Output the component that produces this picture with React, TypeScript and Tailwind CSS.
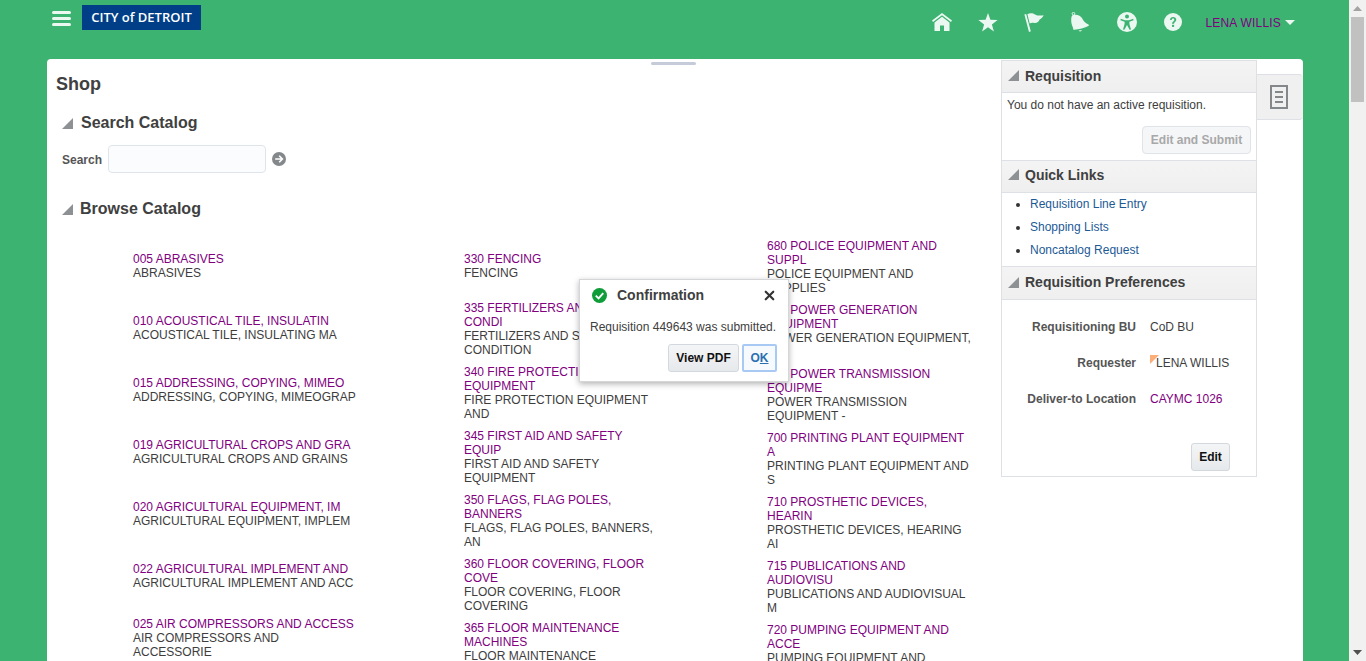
import { X } from "lucide-react"

type Item = { link: string[]; desc: string[] }

const col1: Item[] = [
  { link: ["005 ABRASIVES"], desc: ["ABRASIVES"] },
  { link: ["010 ACOUSTICAL TILE, INSULATIN"], desc: ["ACOUSTICAL TILE, INSULATING MA"] },
  { link: ["015 ADDRESSING, COPYING, MIMEO"], desc: ["ADDRESSING, COPYING, MIMEOGRAP"] },
  { link: ["019 AGRICULTURAL CROPS AND GRA"], desc: ["AGRICULTURAL CROPS AND GRAINS"] },
  { link: ["020 AGRICULTURAL EQUIPMENT, IM"], desc: ["AGRICULTURAL EQUIPMENT, IMPLEM"] },
  { link: ["022 AGRICULTURAL IMPLEMENT AND"], desc: ["AGRICULTURAL IMPLEMENT AND ACC"] },
  { link: ["025 AIR COMPRESSORS AND ACCESS"], desc: ["AIR COMPRESSORS AND", "ACCESSORIE"] },
]

const col2: Item[] = [
  { link: ["330 FENCING"], desc: ["FENCING"] },
  { link: ["335 FERTILIZERS AND SOIL", "CONDI"], desc: ["FERTILIZERS AND SOIL", "CONDITION"] },
  { link: ["340 FIRE PROTECTION", "EQUIPMENT"], desc: ["FIRE PROTECTION EQUIPMENT", "AND"] },
  { link: ["345 FIRST AID AND SAFETY", "EQUIP"], desc: ["FIRST AID AND SAFETY", "EQUIPMENT"] },
  { link: ["350 FLAGS, FLAG POLES,", "BANNERS"], desc: ["FLAGS, FLAG POLES, BANNERS,", "AN"] },
  { link: ["360 FLOOR COVERING, FLOOR", "COVE"], desc: ["FLOOR COVERING, FLOOR", "COVERING"] },
  { link: ["365 FLOOR MAINTENANCE", "MACHINES"], desc: ["FLOOR MAINTENANCE", "MACHINES"] },
]

const col3: Item[] = [
  { link: ["680 POLICE EQUIPMENT AND", "SUPPL"], desc: ["POLICE EQUIPMENT AND", "SUPPLIES"] },
  { link: ["685 POWER GENERATION", "EQUIPMENT"], desc: ["POWER GENERATION EQUIPMENT,", "A"] },
  { link: ["690 POWER TRANSMISSION", "EQUIPME"], desc: ["POWER TRANSMISSION", "EQUIPMENT -"] },
  { link: ["700 PRINTING PLANT EQUIPMENT", "A"], desc: ["PRINTING PLANT EQUIPMENT AND", "S"] },
  { link: ["710 PROSTHETIC DEVICES,", "HEARIN"], desc: ["PROSTHETIC DEVICES, HEARING", "AI"] },
  { link: ["715 PUBLICATIONS AND", "AUDIOVISU"], desc: ["PUBLICATIONS AND AUDIOVISUAL", "M"] },
  { link: ["720 PUMPING EQUIPMENT AND", "ACCE"], desc: ["PUMPING EQUIPMENT AND", "ACCESSORIES"] },
]

function Corner({ className }: { className: string }) {
  return (
    <svg viewBox="0 0 11 11" className={className}>
      <path d="M11 0V11H0Z" fill="#8e9194" />
    </svg>
  )
}

function CatalogColumn({ items, first, rest, width }: { items: Item[]; first: string; rest: string; width: string }) {
  return (
    <div className={`flex flex-col shrink-0 ${width}`}>
      {items.map((item, i) => (
        <div key={item.link[0]} className={`flex flex-col justify-center text-xs leading-[14px] whitespace-nowrap ${i === 0 ? first : rest}`}>
          {item.link.map((l) => (
            <a key={l} className="text-[#800080]">{l}</a>
          ))}
          {item.desc.map((d) => (
            <span key={d} className="text-[#3d3d3d]">{d}</span>
          ))}
        </div>
      ))}
    </div>
  )
}

function PanelHeader({ title, height }: { title: string; height: string }) {
  return (
    <div className={`flex items-center gap-[6px] pl-[6px] border-y border-[#dde0e4] bg-gradient-to-b from-[#f4f4f4] to-[#efefef] ${height}`}>
      <Corner className="w-[11px] h-[11px]" />
      <span className="text-sm font-bold text-[#404040]">{title}</span>
    </div>
  )
}

function TopIcons() {
  return (
    <div className="flex items-center text-[#ebf8f1]">
      <svg viewBox="0 0 20 18" className="w-[20px] h-[18px] fill-current">
        <path d="M10 0 20 7.6 19 8.9 10 2.2 1 8.9 0 7.6Z" />
        <path d="M10 3.8 17.5 9.4V18H12V12.5H8V18H2.5V9.4Z" />
      </svg>
      <svg viewBox="0 0 20 19" className="ml-[26px] w-[20px] h-[19px] fill-current">
        <path d="M10 0 12.4 6.8 19.6 7 13.9 11.4 15.9 18.4 10 14.3 4.1 18.4 6.1 11.4 0.4 7 7.6 6.8Z" />
      </svg>
      <svg viewBox="0 0 20 19" className="ml-[26px] w-[20px] h-[19px] fill-current">
        <path d="M0.4 1.6 2.2 1 6.8 18.3 5 18.9Z" />
        <path d="M3.4 1.2C6 -0.4 9 0.2 11 1.4 13 2.6 16.6 3 19.6 2.2 18.6 4.6 17.4 5.4 15.6 6.4 15.2 8.4 12.8 10.2 10.6 10 8.8 9.8 7.4 9.4 5.7 10.6Z" />
      </svg>
      <svg viewBox="0 0 20 21" className="ml-[27px] w-[19px] h-[20px] fill-current">
        <circle cx="2.6" cy="1.8" r="1.4" fill="none" stroke="currentColor" strokeWidth="1" />
        <path d="M1.5 3.4C5 2 10 3 12 7 13.5 10 15.5 11.5 18.5 13.2L18.8 14.5C14 17 8 18.8 2.5 18.6 2.5 16 0.5 14 0.3 10.5 0.2 8 0 5 1.5 3.4Z" />
        <path d="M8 19.4C9 19.5 10.2 19.3 11.4 19 11.1 20.6 9 21 8 19.4Z" />
      </svg>
      <svg viewBox="0 0 20 20" className="ml-[27px] w-[20px] h-[20px]">
        <circle cx="10" cy="10" r="10" fill="currentColor" />
        <circle cx="10" cy="4.6" r="2" fill="#3db372" />
        <path d="M3.8 6.8 8 8.2H12L16.2 6.8 16.6 8.2 12.4 9.8V12L14 17.4 12.6 17.8 10 13 7.4 17.8 6 17.4 7.6 12V9.8L3.4 8.2Z" fill="#3db372" />
      </svg>
      <svg viewBox="0 0 18 18" className="ml-[27px] w-[18px] h-[18px]">
        <circle cx="9" cy="9" r="9" fill="currentColor" />
        <path d="M6 7C6 5 7.4 4 9.1 4 11 4 12.3 5.1 12.3 6.8 12.3 8.9 10 9 10 10.8H8.1C8 8.3 10.3 8.2 10.3 6.9 10.3 6.1 9.8 5.6 9 5.6 8.2 5.6 7.8 6.2 7.7 7Z" fill="#3db372" />
        <rect x="8" y="11.8" width="2.1" height="2.1" fill="#3db372" />
      </svg>
    </div>
  )
}

export default function App() {
  return (
    <div className="relative flex w-[1366px] h-[661px] overflow-hidden bg-[#3db372] font-['Liberation_Sans',Arial,sans-serif]">
      <div className="flex flex-col w-[1349px] shrink-0">
        {/* Top bar */}
        <div className="flex h-[59px] shrink-0 pl-[52px] pr-[54px]">
          <div className="flex flex-col gap-[3px] w-[19px] pt-[11px]">
            <div className="h-[3px] rounded-sm bg-[#ebf8f1]" />
            <div className="h-[3px] rounded-sm bg-[#ebf8f1]" />
            <div className="h-[3px] rounded-sm bg-[#ebf8f1]" />
          </div>
          <div className="ml-[11px] mt-[5px] pt-[1px] flex items-center justify-center w-[119px] h-[25px] bg-[#003f87] text-white text-[13px] font-semibold font-['Open_Sans',sans-serif]">
            CITY of DETROIT
          </div>
          <div className="ml-auto flex items-start pt-[12px]">
            <TopIcons />
            <span className="ml-[23px] mt-[3px] text-xs tracking-[0.2px] text-[#800080]">LENA WILLIS</span>
            <svg viewBox="0 0 10 5" className="ml-[4px] mt-[8px] w-[10px] h-[5px]">
              <path d="M0 0H10L5 5Z" fill="#ebf8f1" />
            </svg>
          </div>
        </div>

        {/* Main card */}
        <div className="relative flex flex-1 ml-[47px] w-[1256px] bg-white rounded-t-sm overflow-hidden">
          <div className="absolute left-[604px] top-[3px] w-[45px] h-[3px] rounded-sm bg-[#c5cbd9]" />

          <div className="w-[954px] shrink-0">
            <div className="flex items-center h-[50px] pl-[9px] text-lg font-bold text-[#404040]">Shop</div>
            <div className="flex items-center h-[26px] pt-[2px] pl-[15px] gap-[8px]">
              <Corner className="w-[11px] h-[11px]" />
              <span className="text-base font-bold text-[#404040]">Search Catalog</span>
            </div>
            <div className="flex items-center mt-[10px] h-[28px] pl-[15px]">
              <span className="pt-[2px] text-xs font-bold text-[#555555]">Search</span>
              <div className="ml-[6px] w-[158px] h-[28px] rounded-sm border border-[#dfe4ea] bg-[#fbfcfe]" />
              <svg viewBox="0 0 14 14" className="ml-[6px] w-[14px] h-[14px]">
                <circle cx="7" cy="7" r="7" fill="#85888b" />
                <path d="M3.2 7H10M7.2 3.8 10.4 7 7.2 10.2" fill="none" stroke="#fff" strokeWidth="1.6" />
              </svg>
            </div>
            <div className="flex items-center mt-[22px] h-[26px] pt-[2px] pl-[15px] gap-[7px]">
              <Corner className="w-[11px] h-[11px]" />
              <span className="text-base font-bold text-[#404040]">Browse Catalog</span>
            </div>
            <div className="flex mt-[14px] pl-[85px]">
              <div className="w-[332px] shrink-0 pl-px">
                <CatalogColumn items={col1} first="h-[62px]" rest="h-[62px]" width="w-[331px]" />
              </div>
              <CatalogColumn items={col2} first="h-[62px]" rest="h-[64px]" width="w-[303px]" />
              <CatalogColumn items={col3} first="h-[64px]" rest="h-[64px]" width="w-[200px]" />
            </div>
          </div>

          {/* Right panel */}
          <div className="w-[256px] h-[417px] mt-px shrink-0 border-x border-b border-[#dde0e4] flex flex-col">
            <PanelHeader title="Requisition" height="h-[33px] pb-[2px]" />
            <div className="h-[67px]">
              <p className="pl-[5px] pt-[5px] text-xs leading-[14px] text-[#3d3d3d]">You do not have an active requisition.</p>
              <div className="flex justify-end pr-[5px] mt-[14px]">
                <div className="flex items-center justify-center w-[109px] h-[28px] rounded-sm border border-[#e0e3e7] bg-[#f5f6f8] text-xs font-bold text-[#a8a8a8]">
                  Edit and Submit
                </div>
              </div>
            </div>
            <PanelHeader title="Quick Links" height="h-[33px] pb-[4px]" />
            <ul className="h-[73px] pl-[28px] list-disc list-outside text-xs leading-[23px] text-[#1c5a96] marker:text-[#333333]">
              <li>Requisition Line Entry</li>
              <li>Shopping Lists</li>
              <li>Noncatalog Request</li>
            </ul>
            <PanelHeader title="Requisition Preferences" height="h-[34px] pb-[2px]" />
            <div className="grid grid-cols-[134px_1fr] gap-x-[14px] gap-y-[22px] pt-[20px] text-xs leading-[14px]">
              <span className="text-right font-bold text-[#555555]">Requisitioning BU</span>
              <span className="text-[#3d3d3d]">CoD BU</span>
              <span className="text-right font-bold text-[#555555]">Requester</span>
              <span className="relative pl-[6px] text-[#3d3d3d]">
                <svg viewBox="0 0 9 9" className="absolute left-0 -top-[1px] w-[9px] h-[9px]">
                  <path d="M0 0H9L0 9Z" fill="#fcae78" />
                </svg>
                LENA WILLIS
              </span>
              <span className="text-right font-bold text-[#555555]">Deliver-to Location</span>
              <span className="text-[#800080]">CAYMC 1026</span>
            </div>
            <div className="flex justify-end pr-[26px] mt-[37px]">
              <div className="flex items-center justify-center w-[39px] h-[28px] rounded-[3px] border border-[#d3d8de] bg-gradient-to-b from-[#f4f5f6] to-[#e6e9ec] text-xs font-bold text-[#111111]">
                Edit
              </div>
            </div>
          </div>

          {/* Side tab */}
          <div className="w-[46px] shrink-0">
            <div className="mt-[15px] flex items-center justify-center h-[46px] bg-[#f0f0f0] border-y border-[#dde0e4] rounded-r-sm">
              <svg viewBox="0 0 18 24" className="w-[18px] h-[24px] -ml-[3px]">
                <rect x="1" y="1" width="16" height="22" fill="none" stroke="#85888b" strokeWidth="2" />
                <path d="M5 7H13M5 12H13M5 17H13" stroke="#85888b" strokeWidth="2" />
              </svg>
            </div>
          </div>
        </div>
      </div>

      {/* Scrollbar */}
      <div className="relative w-[17px] shrink-0 bg-[#f1f1f1]">
        <svg viewBox="0 0 9 5" className="absolute left-[4px] top-[6px] w-[9px] h-[5px]">
          <path d="M4.5 0 9 5H0Z" fill="#a3a3a3" />
        </svg>
        <div className="absolute left-[2px] top-[17px] w-[13px] h-[85px] bg-[#c1c1c1]" />
        <svg viewBox="0 0 9 5" className="absolute left-[4px] bottom-[6px] w-[9px] h-[5px]">
          <path d="M0 0H9L4.5 5Z" fill="#505050" />
        </svg>
      </div>

      {/* Confirmation dialog */}
      <div className="absolute left-[579px] top-[279px] w-[210px] h-[103px] bg-white border border-[#d4d6d8] shadow-[0_2px_6px_rgba(0,0,0,0.3)] flex flex-col">
        <div className="flex items-center h-[30px] pl-[12px] pr-[11px]">
          <svg viewBox="0 0 16 16" className="w-[15px] h-[15px]">
            <circle cx="8" cy="8" r="8" fill="#0f9d3a" />
            <path d="M4 8.2 7 11 12 5.4" fill="none" stroke="#fff" strokeWidth="2" />
          </svg>
          <span className="ml-[10px] text-sm font-bold text-[#404040]">Confirmation</span>
          <X className="ml-auto w-[15px] h-[15px] text-[#333333]" strokeWidth={3.5} />
        </div>
        <p className="pl-[10px] mt-[10px] text-xs leading-[14px] text-[#404040]">Requisition 449643 was submitted.</p>
        <div className="flex justify-end gap-[3px] pr-[11px] mt-[10px]">
          <div className="flex items-center justify-center w-[71px] h-[28px] rounded-[3px] border border-[#d3d8de] bg-gradient-to-b from-[#f4f5f6] to-[#e6e9ec] text-xs font-bold text-[#111111]">
            View PDF
          </div>
          <div className="flex items-center justify-center w-[35px] h-[28px] rounded-[2px] border-2 border-[#a9c9f5] bg-[#f7fafd] text-xs font-bold text-[#2a6fb0]">
            O<span className="underline">K</span>
          </div>
        </div>
      </div>
    </div>
  )
}
